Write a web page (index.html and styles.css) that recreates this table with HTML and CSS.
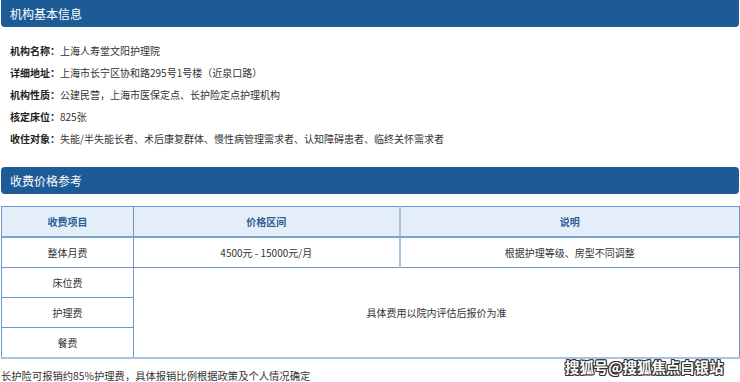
FILE: index.html
```html
<!DOCTYPE html>
<html lang="zh">
<head>
<meta charset="utf-8">
<link rel="stylesheet" href="styles.css">
</head>
<body>
<div class="page">
  <div class="bar">机构基本信息</div>
  <div class="info">
    <div class="row"><span class="label">机构名称：</span>上海人寿堂文阳护理院</div>
    <div class="row"><span class="label">详细地址：</span>上海市长宁区协和路295号1号楼（近泉口路）</div>
    <div class="row"><span class="label">机构性质：</span>公建民营，上海市医保定点、长护险定点护理机构</div>
    <div class="row"><span class="label">核定床位：</span>825张</div>
    <div class="row"><span class="label">收住对象：</span>失能/半失能长者、术后康复群体、慢性病管理需求者、认知障碍患者、临终关怀需求者</div>
  </div>
  <div class="bar bar2">收费价格参考</div>
  <table class="fees">
    <colgroup><col class="c1"><col class="c2"><col class="c3"></colgroup>
    <thead>
      <tr><th>收费项目</th><th>价格区间</th><th class="div">说明</th></tr>
    </thead>
    <tbody>
      <tr><td>整体月费</td><td>4500元 - 15000元/月</td><td class="div">根据护理等级、房型不同调整</td></tr>
      <tr><td>床位费</td><td colspan="2" rowspan="3">具体费用以院内评估后报价为准</td></tr>
      <tr><td>护理费</td></tr>
      <tr><td>餐费</td></tr>
    </tbody>
  </table>
  <p class="note">长护险可报销约85%护理费，具体报销比例根据政策及个人情况确定</p>
  <div class="watermark">搜狐号@搜狐焦点白银站</div>
</div>
</body>
</html>
```
FILE: styles.css
```css
html, body {
  margin: 0;
  padding: 0;
  background: #ffffff;
}
body {
  font-family: "Noto Sans CJK SC", "Noto Sans", sans-serif;
  color: #333333;
}
.page {
  position: relative;
  width: 740px;
}
.bar {
  margin: 0 1px;
  height: 27px;
  line-height: 27px;
  background: #1d5b97;
  color: #ffffff;
  font-size: 12px;
  padding-left: 9px;
  border-radius: 0 0 4px 4px;
}
.bar2 {
  border-radius: 4px;
  margin-top: 17px;
}
.info {
  padding: 13px 0 0 10px;
  font-size: 10px;
}
.row {
  height: 22px;
  line-height: 22px;
  white-space: nowrap;
}
.label {
  font-weight: bold;
  color: #222222;
}
.fees {
  margin: 12px 0 0 1px;
  width: 738px;
  border-collapse: collapse;
  table-layout: fixed;
  font-size: 10px;
  border-bottom: 2px solid #a9c4e0;
}
.c1 { width: 132px; }
.c2 { width: 266px; }
.c3 { width: 340px; }
.fees th, .fees td {
  border: 1px solid #6c98c9;
  text-align: center;
  height: 29px;
  padding: 0;
}
.fees th {
  background: #e4eef9;
  color: #2c5e95;
  font-weight: bold;
  border-bottom: 2px solid #7aa3d0;
}
.fees .div {
  border-left: 2px solid #a7c3e1;
}
.fees tbody tr:last-child td {
  border-bottom: 1px solid #6c98c9;
}
.note {
  margin: 11px 0 0 1px;
  font-size: 10.3px;
  line-height: 12px;
  color: #333333;
}
.watermark {
  position: absolute;
  left: 565px;
  top: 357px;
  font-size: 14.4px;
  line-height: 20px;
  color: #ffffff;
  font-weight: bold;
  text-shadow: -1px -1px 0 #333, 1px -1px 0 #333, -1px 1px 0 #333, 1px 1px 0 #333, 0 1px 0 #333, 1px 0 0 #333, 0 -1px 0 #333, -1px 0 0 #333;
}
```
